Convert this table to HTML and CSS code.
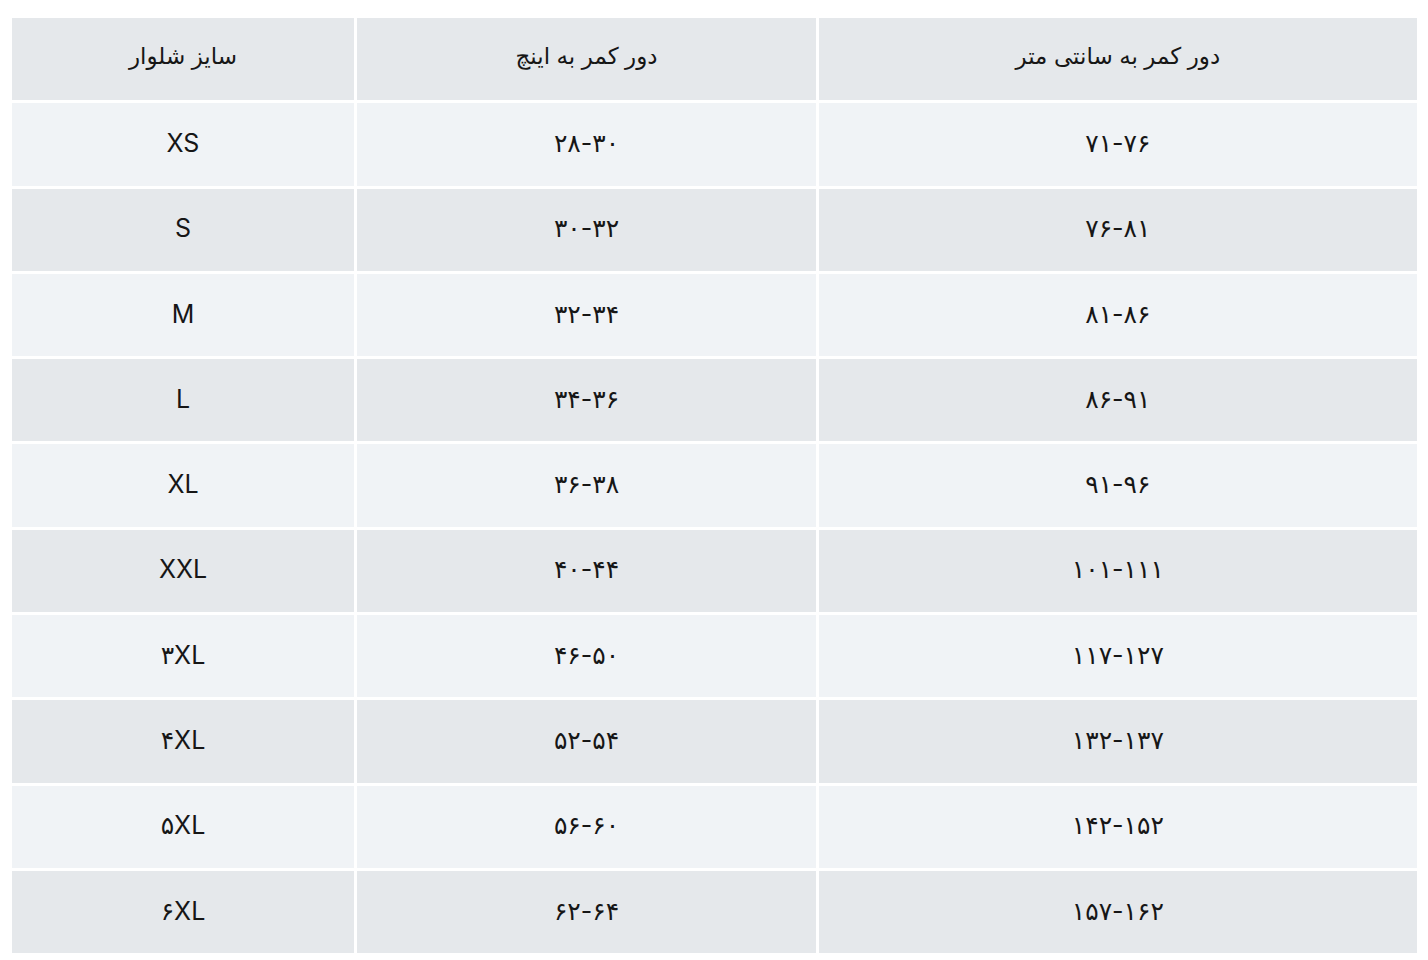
FILE: index.html
```html
<!DOCTYPE html>
<html lang="fa">
<head>
<meta charset="utf-8">
<title>جدول سایز شلوار</title>
<link rel="stylesheet" href="styles.css">
</head>
<body>
<table class="size-table">
  <colgroup>
    <col class="col-size">
    <col class="col-inch">
    <col class="col-cm">
  </colgroup>
  <thead>
    <tr class="row-dark">
      <th>سایز شلوار</th>
      <th>دور کمر به اینچ</th>
      <th>دور کمر به سانتی متر</th>
    </tr>
  </thead>
  <tbody>
    <tr class="row-light"><td>XS</td><td>۲۸-۳۰</td><td>۷۱-۷۶</td></tr>
    <tr class="row-dark"><td>S</td><td>۳۰-۳۲</td><td>۷۶-۸۱</td></tr>
    <tr class="row-light"><td>M</td><td>۳۲-۳۴</td><td>۸۱-۸۶</td></tr>
    <tr class="row-dark"><td>L</td><td>۳۴-۳۶</td><td>۸۶-۹۱</td></tr>
    <tr class="row-light"><td>XL</td><td>۳۶-۳۸</td><td>۹۱-۹۶</td></tr>
    <tr class="row-dark"><td>XXL</td><td>۴۰-۴۴</td><td>۱۰۱-۱۱۱</td></tr>
    <tr class="row-light"><td>۳XL</td><td>۴۶-۵۰</td><td>۱۱۷-۱۲۷</td></tr>
    <tr class="row-dark"><td>۴XL</td><td>۵۲-۵۴</td><td>۱۳۲-۱۳۷</td></tr>
    <tr class="row-light"><td>۵XL</td><td>۵۶-۶۰</td><td>۱۴۲-۱۵۲</td></tr>
    <tr class="row-dark"><td>۶XL</td><td>۶۲-۶۴</td><td>۱۵۷-۱۶۲</td></tr>
  </tbody>
</table>
</body>
</html>
```

FILE: styles.css
```css
html, body {
  margin: 0;
  padding: 0;
  background: #ffffff;
}

body {
  font-family: Inter, "DejaVu Sans", sans-serif;
  color: #161616;
}

.size-table {
  table-layout: fixed;
  border-collapse: separate;
  border-spacing: 3px;
  width: 1410.7px;
  margin: 15px 0 0 9px;
}

.col-size { width: 342px; }
.col-inch { width: 459px; }
.col-cm { width: 597.7px; }

.size-table th,
.size-table td {
  height: 82.3px;
  padding: 0;
  text-align: center;
  vertical-align: middle;
  font-size: 25px;
  font-weight: 400;
  line-height: 1.2;
}

.size-table th {
  font-size: 23px;
  padding-bottom: 4px;
  box-sizing: border-box;
}

.size-table td {
  padding-bottom: 3px;
  box-sizing: border-box;
}

.row-dark th,
.row-dark td {
  background: #e5e8eb;
}

.row-light td {
  background: #f0f3f6;
}
```
